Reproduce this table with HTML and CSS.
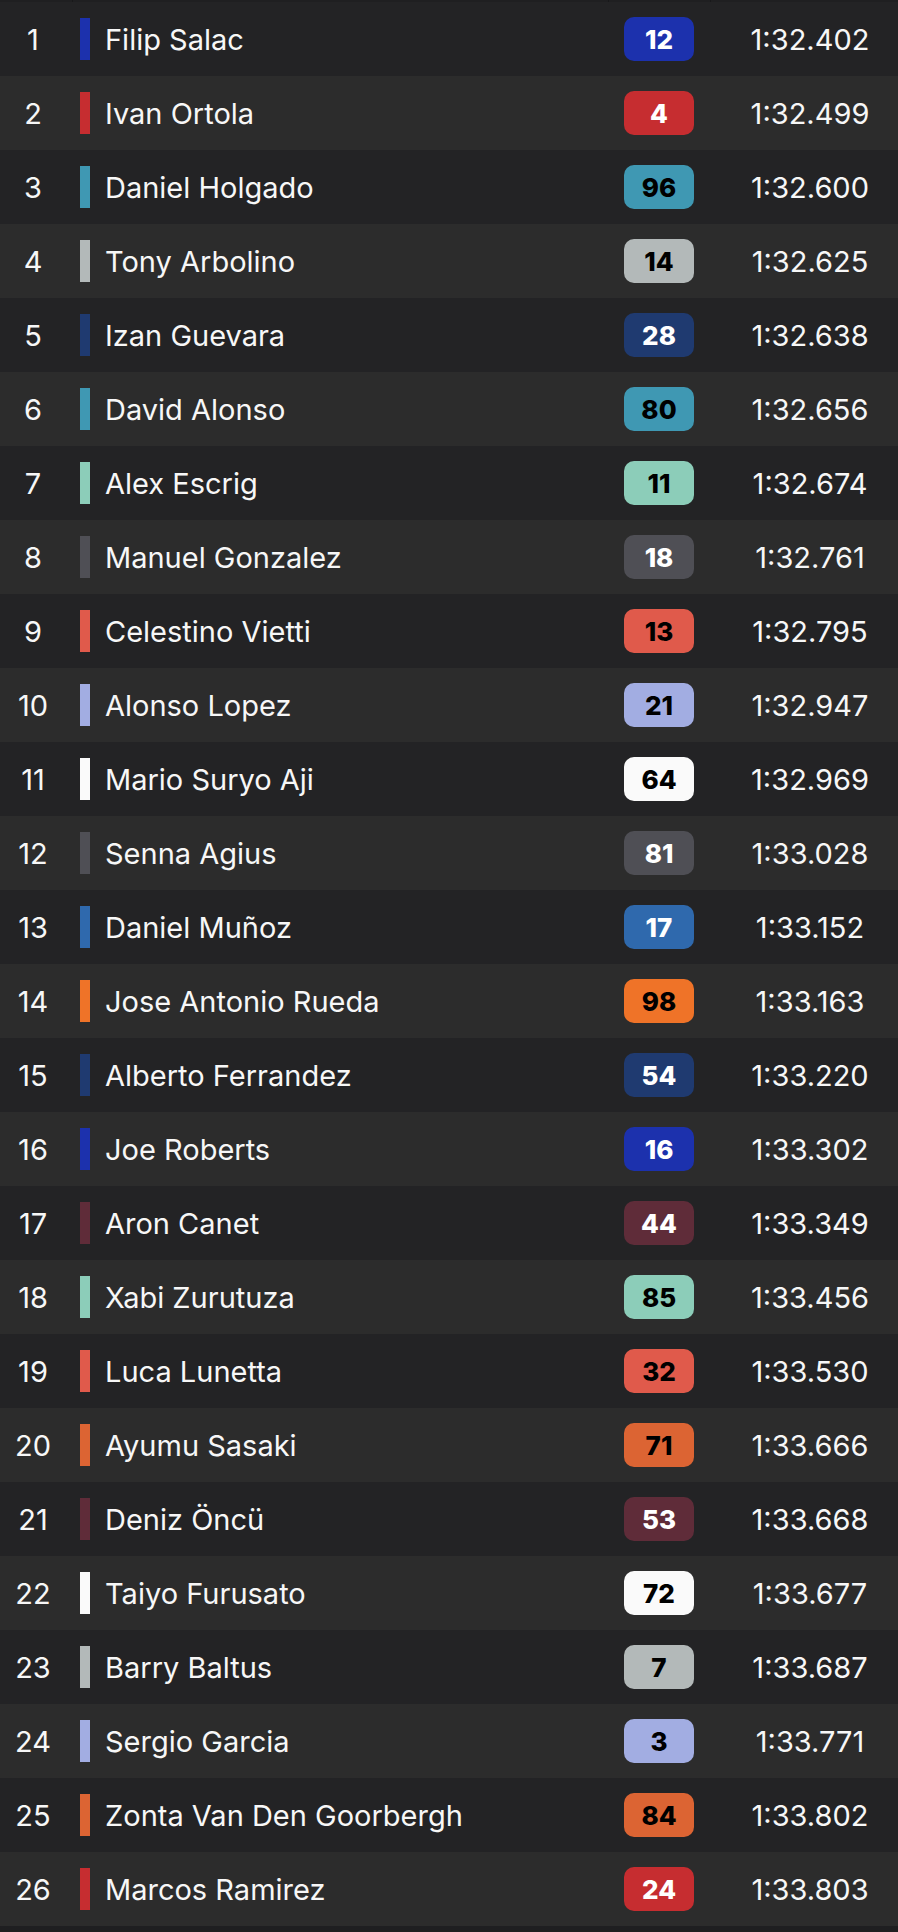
FILE: index.html
```html
<!DOCTYPE html>
<html lang="en">
<head>
    <meta charset="UTF-8">
    <meta name="viewport" content="width=device-width, initial-scale=1.0">
    <title>Qualifying Times</title>
    <link rel="stylesheet" href="styles.css">
</head>
<body>
    <div class="timing">
        <div class="head-strip">
            <span></span><span></span><span></span><span></span>
        </div>

        <div class="row">
            <div class="pos">1</div>
            <div class="rider"><span class="bar blue"></span>Filip Salac</div>
            <div class="num-cell"><span class="num blue">12</span></div>
            <div class="time">1:32.402</div>
        </div>
        <div class="row">
            <div class="pos">2</div>
            <div class="rider"><span class="bar red"></span>Ivan Ortola</div>
            <div class="num-cell"><span class="num red">4</span></div>
            <div class="time">1:32.499</div>
        </div>
        <div class="row">
            <div class="pos">3</div>
            <div class="rider"><span class="bar teal"></span>Daniel Holgado</div>
            <div class="num-cell"><span class="num teal">96</span></div>
            <div class="time">1:32.600</div>
        </div>
        <div class="row">
            <div class="pos">4</div>
            <div class="rider"><span class="bar silver"></span>Tony Arbolino</div>
            <div class="num-cell"><span class="num silver">14</span></div>
            <div class="time">1:32.625</div>
        </div>
        <div class="row">
            <div class="pos">5</div>
            <div class="rider"><span class="bar navy"></span>Izan Guevara</div>
            <div class="num-cell"><span class="num navy">28</span></div>
            <div class="time">1:32.638</div>
        </div>
        <div class="row">
            <div class="pos">6</div>
            <div class="rider"><span class="bar teal"></span>David Alonso</div>
            <div class="num-cell"><span class="num teal">80</span></div>
            <div class="time">1:32.656</div>
        </div>
        <div class="row">
            <div class="pos">7</div>
            <div class="rider"><span class="bar mint"></span>Alex Escrig</div>
            <div class="num-cell"><span class="num mint">11</span></div>
            <div class="time">1:32.674</div>
        </div>
        <div class="row">
            <div class="pos">8</div>
            <div class="rider"><span class="bar slate"></span>Manuel Gonzalez</div>
            <div class="num-cell"><span class="num slate">18</span></div>
            <div class="time">1:32.761</div>
        </div>
        <div class="row">
            <div class="pos">9</div>
            <div class="rider"><span class="bar coral"></span>Celestino Vietti</div>
            <div class="num-cell"><span class="num coral">13</span></div>
            <div class="time">1:32.795</div>
        </div>
        <div class="row">
            <div class="pos">10</div>
            <div class="rider"><span class="bar lilac"></span>Alonso Lopez</div>
            <div class="num-cell"><span class="num lilac">21</span></div>
            <div class="time">1:32.947</div>
        </div>
        <div class="row">
            <div class="pos">11</div>
            <div class="rider"><span class="bar white"></span>Mario Suryo Aji</div>
            <div class="num-cell"><span class="num white">64</span></div>
            <div class="time">1:32.969</div>
        </div>
        <div class="row">
            <div class="pos">12</div>
            <div class="rider"><span class="bar slate"></span>Senna Agius</div>
            <div class="num-cell"><span class="num slate">81</span></div>
            <div class="time">1:33.028</div>
        </div>
        <div class="row">
            <div class="pos">13</div>
            <div class="rider"><span class="bar steel"></span>Daniel Muñoz</div>
            <div class="num-cell"><span class="num steel">17</span></div>
            <div class="time">1:33.152</div>
        </div>
        <div class="row">
            <div class="pos">14</div>
            <div class="rider"><span class="bar orange"></span>Jose Antonio Rueda</div>
            <div class="num-cell"><span class="num orange">98</span></div>
            <div class="time">1:33.163</div>
        </div>
        <div class="row">
            <div class="pos">15</div>
            <div class="rider"><span class="bar navy"></span>Alberto Ferrandez</div>
            <div class="num-cell"><span class="num navy">54</span></div>
            <div class="time">1:33.220</div>
        </div>
        <div class="row">
            <div class="pos">16</div>
            <div class="rider"><span class="bar blue"></span>Joe Roberts</div>
            <div class="num-cell"><span class="num blue">16</span></div>
            <div class="time">1:33.302</div>
        </div>
        <div class="row">
            <div class="pos">17</div>
            <div class="rider"><span class="bar maroon"></span>Aron Canet</div>
            <div class="num-cell"><span class="num maroon">44</span></div>
            <div class="time">1:33.349</div>
        </div>
        <div class="row">
            <div class="pos">18</div>
            <div class="rider"><span class="bar mint"></span>Xabi Zurutuza</div>
            <div class="num-cell"><span class="num mint">85</span></div>
            <div class="time">1:33.456</div>
        </div>
        <div class="row">
            <div class="pos">19</div>
            <div class="rider"><span class="bar coral"></span>Luca Lunetta</div>
            <div class="num-cell"><span class="num coral">32</span></div>
            <div class="time">1:33.530</div>
        </div>
        <div class="row">
            <div class="pos">20</div>
            <div class="rider"><span class="bar rust"></span>Ayumu Sasaki</div>
            <div class="num-cell"><span class="num rust">71</span></div>
            <div class="time">1:33.666</div>
        </div>
        <div class="row">
            <div class="pos">21</div>
            <div class="rider"><span class="bar maroon"></span>Deniz Öncü</div>
            <div class="num-cell"><span class="num maroon">53</span></div>
            <div class="time">1:33.668</div>
        </div>
        <div class="row">
            <div class="pos">22</div>
            <div class="rider"><span class="bar white"></span>Taiyo Furusato</div>
            <div class="num-cell"><span class="num white">72</span></div>
            <div class="time">1:33.677</div>
        </div>
        <div class="row">
            <div class="pos">23</div>
            <div class="rider"><span class="bar silver"></span>Barry Baltus</div>
            <div class="num-cell"><span class="num silver">7</span></div>
            <div class="time">1:33.687</div>
        </div>
        <div class="row">
            <div class="pos">24</div>
            <div class="rider"><span class="bar lilac"></span>Sergio Garcia</div>
            <div class="num-cell"><span class="num lilac">3</span></div>
            <div class="time">1:33.771</div>
        </div>
        <div class="row">
            <div class="pos">25</div>
            <div class="rider"><span class="bar rust"></span>Zonta Van Den Goorbergh</div>
            <div class="num-cell"><span class="num rust">84</span></div>
            <div class="time">1:33.802</div>
        </div>
        <div class="row">
            <div class="pos">26</div>
            <div class="rider"><span class="bar red"></span>Marcos Ramirez</div>
            <div class="num-cell"><span class="num red">24</span></div>
            <div class="time">1:33.803</div>
        </div>
    </div>
</body>
</html>
```
FILE: styles.css
```css
body {
    margin: 0;
    padding: 0;
    background-color: #1f1f21;
    font-family: Inter, "Noto Sans", sans-serif;
    color: #f7f7f7;
}
.timing {
    width: 898px;
}
.head-strip {
    display: grid;
    grid-template-columns: 72px 536px 102px 188px;
    height: 2px;
    background: #1f1f21;
}
.head-strip span {
    border-left: 1px solid #18181a;
}
.head-strip span:first-child {
    border-left: none;
}
.row {
    display: grid;
    grid-template-columns: 72px 536px 102px 188px;
    align-items: center;
    height: 74px;
    background-color: #232325;
}
.row:nth-child(odd) {
    background-color: #2c2c2c;
}
.pos {
    font-size: 29px;
    text-align: center;
    padding-right: 6px;
}
.rider {
    display: flex;
    align-items: center;
    font-size: 29px;
    padding-left: 8px;
    white-space: nowrap;
}
.bar {
    width: 10px;
    height: 42px;
    margin-right: 15px;
    flex-shrink: 0;
}
.num-cell {
    display: flex;
    justify-content: center;
}
.num {
    width: 70px;
    height: 44px;
    border-radius: 10px;
    display: flex;
    align-items: center;
    justify-content: center;
    font-size: 26px;
    font-weight: 800;
    color: #fff;
}
.time {
    font-size: 29px;
    text-align: center;
    padding-left: 12px;
}

/* team colours */
.blue { background: #1c31ad; }
.red { background: #c62d30; }
.teal { background: #3f98b3; color: #000; }
.silver { background: #b3b9b9; color: #000; }
.navy { background: #1f3a70; }
.mint { background: #8ccdb9; color: #000; }
.slate { background: #4f4f55; }
.coral { background: #e05a4b; color: #000; }
.lilac { background: #a2ade2; color: #000; }
.white { background: #fafafa; color: #000; }
.steel { background: #2f69ad; }
.orange { background: #ef7328; color: #000; }
.maroon { background: #5f2c39; }
.rust { background: #dc6433; color: #000; }
```
